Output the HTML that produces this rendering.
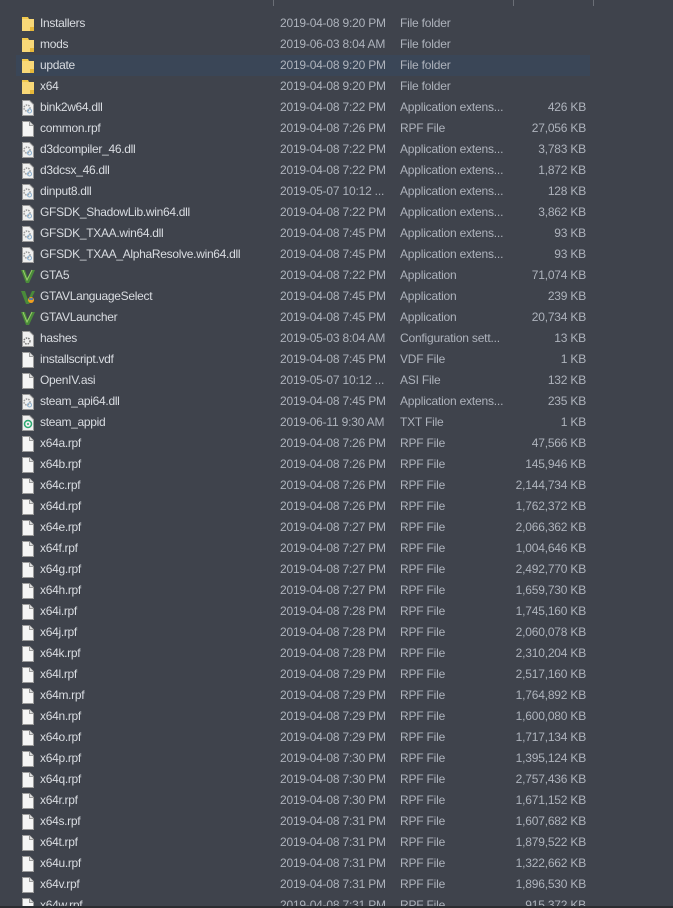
<!DOCTYPE html>
<html><head><meta charset="utf-8"><style>
body{margin:0;width:673px;height:908px;background:#3f434c;overflow:hidden;position:relative;font-family:"Liberation Sans",sans-serif;font-size:12px;}
#w{position:absolute;left:0;top:1px;width:673px;height:905px;overflow:hidden}
.r{position:absolute;left:0;width:673px;height:21px;line-height:21px;}
.r.sel{background:#3a4657;left:16px;width:574px;}
.r.sel>*{margin-left:-16px}
.ic{position:absolute;left:21px;top:3px;width:14px;height:16px}
.n{position:absolute;left:40px;color:#d9dce1;white-space:nowrap;letter-spacing:-0.3px}
.d{position:absolute;left:280px;color:#aeb3bc;white-space:nowrap;letter-spacing:-0.2px}
.t{position:absolute;left:400px;color:#aeb3bc;white-space:nowrap;letter-spacing:-0.2px}
.s{position:absolute;right:87px;color:#aeb3bc;white-space:nowrap;text-align:right;letter-spacing:-0.2px}
.sel .d{margin-left:-16px}.sel .s{right:71px}
.div{position:absolute;top:0;width:1px;height:6px;background:#6a6e76}
.bot{position:absolute;left:0;top:906px;width:673px;height:2px;background:#2b2d31}
</style></head><body>
<svg width="0" height="0" style="position:absolute">
<defs>
<symbol id="fo" viewBox="0 0 14 16"><path d="M1 1h6l1 2h5v12H1z" fill="#f2c94c"/><path d="M1 3h12v12H1z" fill="#f8d878"/><path d="M9 11h4v4H9z" fill="#e8b93a"/></symbol>
<symbol id="fi" viewBox="0 0 14 16"><path d="M1.5 .5h7l4 4v11h-11z" fill="#f5f5f5" stroke="#9a9a9a"/><path d="M8.5 .5v4h4" fill="#ddd" stroke="#9a9a9a"/></symbol>
<symbol id="dl" viewBox="0 0 14 16"><path d="M1.5 .5h7l4 4v11h-11z" fill="#f0f0f0" stroke="#9a9a9a"/><circle cx="6" cy="8" r="3" fill="none" stroke="#999" stroke-width="1.5" stroke-dasharray="1.5 1"/><circle cx="8.5" cy="11" r="2" fill="none" stroke="#8ab0d0" stroke-width="1"/></symbol>
<symbol id="cf" viewBox="0 0 14 16"><path d="M1.5 .5h7l4 4v11h-11z" fill="#f0f0f0" stroke="#9a9a9a"/><circle cx="6" cy="10" r="3" fill="none" stroke="#777" stroke-width="1.5" stroke-dasharray="1.5 1"/></symbol>
<symbol id="st" viewBox="0 0 14 16"><path d="M1.5 .5h7l4 4v11h-11z" fill="#f0f0f0" stroke="#9a9a9a"/><circle cx="7" cy="9" r="3.5" fill="none" stroke="#2aa870" stroke-width="1.5"/><circle cx="7" cy="9" r="1" fill="#2aa870"/></symbol>
<symbol id="gv" viewBox="0 0 14 16"><path d="M0 2l5 13h3l6-13h-3l-4 9-3-9z" fill="#4a8a3a"/><path d="M2 2l4 10 5-10" fill="none" stroke="#9ad06a" stroke-width="1"/></symbol>
<symbol id="gl" viewBox="0 0 14 16"><path d="M0 2l5 13h3l6-13h-3l-4 9-3-9z" fill="#4a8a3a"/><circle cx="10" cy="11" r="3" fill="#f0a020"/><path d="M8 10h4" stroke="#3070d0" stroke-width="1.5"/></symbol>
</defs></svg>
<div class="div" style="left:273px"></div><div class="div" style="left:513px"></div><div class="div" style="left:593px"></div>
<div id="w">
<div class="r" style="top:12px"><svg class="ic"><use href="#fo"/></svg><span class="n">Installers</span><span class="d">2019-04-08 9:20 PM</span><span class="t">File folder</span></div>
<div class="r" style="top:33px"><svg class="ic"><use href="#fo"/></svg><span class="n">mods</span><span class="d">2019-06-03 8:04 AM</span><span class="t">File folder</span></div>
<div class="r sel" style="top:54px"><svg class="ic"><use href="#fo"/></svg><span class="n">update</span><span class="d">2019-04-08 9:20 PM</span><span class="t">File folder</span></div>
<div class="r" style="top:75px"><svg class="ic"><use href="#fo"/></svg><span class="n">x64</span><span class="d">2019-04-08 9:20 PM</span><span class="t">File folder</span></div>
<div class="r" style="top:96px"><svg class="ic"><use href="#dl"/></svg><span class="n">bink2w64.dll</span><span class="d">2019-04-08 7:22 PM</span><span class="t">Application extens...</span><span class="s">426 KB</span></div>
<div class="r" style="top:117px"><svg class="ic"><use href="#fi"/></svg><span class="n">common.rpf</span><span class="d">2019-04-08 7:26 PM</span><span class="t">RPF File</span><span class="s">27,056 KB</span></div>
<div class="r" style="top:138px"><svg class="ic"><use href="#dl"/></svg><span class="n">d3dcompiler_46.dll</span><span class="d">2019-04-08 7:22 PM</span><span class="t">Application extens...</span><span class="s">3,783 KB</span></div>
<div class="r" style="top:159px"><svg class="ic"><use href="#dl"/></svg><span class="n">d3dcsx_46.dll</span><span class="d">2019-04-08 7:22 PM</span><span class="t">Application extens...</span><span class="s">1,872 KB</span></div>
<div class="r" style="top:180px"><svg class="ic"><use href="#dl"/></svg><span class="n">dinput8.dll</span><span class="d">2019-05-07 10:12 ...</span><span class="t">Application extens...</span><span class="s">128 KB</span></div>
<div class="r" style="top:201px"><svg class="ic"><use href="#dl"/></svg><span class="n">GFSDK_ShadowLib.win64.dll</span><span class="d">2019-04-08 7:22 PM</span><span class="t">Application extens...</span><span class="s">3,862 KB</span></div>
<div class="r" style="top:222px"><svg class="ic"><use href="#dl"/></svg><span class="n">GFSDK_TXAA.win64.dll</span><span class="d">2019-04-08 7:45 PM</span><span class="t">Application extens...</span><span class="s">93 KB</span></div>
<div class="r" style="top:243px"><svg class="ic"><use href="#dl"/></svg><span class="n">GFSDK_TXAA_AlphaResolve.win64.dll</span><span class="d">2019-04-08 7:45 PM</span><span class="t">Application extens...</span><span class="s">93 KB</span></div>
<div class="r" style="top:264px"><svg class="ic"><use href="#gv"/></svg><span class="n">GTA5</span><span class="d">2019-04-08 7:22 PM</span><span class="t">Application</span><span class="s">71,074 KB</span></div>
<div class="r" style="top:285px"><svg class="ic"><use href="#gl"/></svg><span class="n">GTAVLanguageSelect</span><span class="d">2019-04-08 7:45 PM</span><span class="t">Application</span><span class="s">239 KB</span></div>
<div class="r" style="top:306px"><svg class="ic"><use href="#gv"/></svg><span class="n">GTAVLauncher</span><span class="d">2019-04-08 7:45 PM</span><span class="t">Application</span><span class="s">20,734 KB</span></div>
<div class="r" style="top:327px"><svg class="ic"><use href="#cf"/></svg><span class="n">hashes</span><span class="d">2019-05-03 8:04 AM</span><span class="t">Configuration sett...</span><span class="s">13 KB</span></div>
<div class="r" style="top:348px"><svg class="ic"><use href="#fi"/></svg><span class="n">installscript.vdf</span><span class="d">2019-04-08 7:45 PM</span><span class="t">VDF File</span><span class="s">1 KB</span></div>
<div class="r" style="top:369px"><svg class="ic"><use href="#fi"/></svg><span class="n">OpenIV.asi</span><span class="d">2019-05-07 10:12 ...</span><span class="t">ASI File</span><span class="s">132 KB</span></div>
<div class="r" style="top:390px"><svg class="ic"><use href="#dl"/></svg><span class="n">steam_api64.dll</span><span class="d">2019-04-08 7:45 PM</span><span class="t">Application extens...</span><span class="s">235 KB</span></div>
<div class="r" style="top:411px"><svg class="ic"><use href="#st"/></svg><span class="n">steam_appid</span><span class="d">2019-06-11 9:30 AM</span><span class="t">TXT File</span><span class="s">1 KB</span></div>
<div class="r" style="top:432px"><svg class="ic"><use href="#fi"/></svg><span class="n">x64a.rpf</span><span class="d">2019-04-08 7:26 PM</span><span class="t">RPF File</span><span class="s">47,566 KB</span></div>
<div class="r" style="top:453px"><svg class="ic"><use href="#fi"/></svg><span class="n">x64b.rpf</span><span class="d">2019-04-08 7:26 PM</span><span class="t">RPF File</span><span class="s">145,946 KB</span></div>
<div class="r" style="top:474px"><svg class="ic"><use href="#fi"/></svg><span class="n">x64c.rpf</span><span class="d">2019-04-08 7:26 PM</span><span class="t">RPF File</span><span class="s">2,144,734 KB</span></div>
<div class="r" style="top:495px"><svg class="ic"><use href="#fi"/></svg><span class="n">x64d.rpf</span><span class="d">2019-04-08 7:26 PM</span><span class="t">RPF File</span><span class="s">1,762,372 KB</span></div>
<div class="r" style="top:516px"><svg class="ic"><use href="#fi"/></svg><span class="n">x64e.rpf</span><span class="d">2019-04-08 7:27 PM</span><span class="t">RPF File</span><span class="s">2,066,362 KB</span></div>
<div class="r" style="top:537px"><svg class="ic"><use href="#fi"/></svg><span class="n">x64f.rpf</span><span class="d">2019-04-08 7:27 PM</span><span class="t">RPF File</span><span class="s">1,004,646 KB</span></div>
<div class="r" style="top:558px"><svg class="ic"><use href="#fi"/></svg><span class="n">x64g.rpf</span><span class="d">2019-04-08 7:27 PM</span><span class="t">RPF File</span><span class="s">2,492,770 KB</span></div>
<div class="r" style="top:579px"><svg class="ic"><use href="#fi"/></svg><span class="n">x64h.rpf</span><span class="d">2019-04-08 7:27 PM</span><span class="t">RPF File</span><span class="s">1,659,730 KB</span></div>
<div class="r" style="top:600px"><svg class="ic"><use href="#fi"/></svg><span class="n">x64i.rpf</span><span class="d">2019-04-08 7:28 PM</span><span class="t">RPF File</span><span class="s">1,745,160 KB</span></div>
<div class="r" style="top:621px"><svg class="ic"><use href="#fi"/></svg><span class="n">x64j.rpf</span><span class="d">2019-04-08 7:28 PM</span><span class="t">RPF File</span><span class="s">2,060,078 KB</span></div>
<div class="r" style="top:642px"><svg class="ic"><use href="#fi"/></svg><span class="n">x64k.rpf</span><span class="d">2019-04-08 7:28 PM</span><span class="t">RPF File</span><span class="s">2,310,204 KB</span></div>
<div class="r" style="top:663px"><svg class="ic"><use href="#fi"/></svg><span class="n">x64l.rpf</span><span class="d">2019-04-08 7:29 PM</span><span class="t">RPF File</span><span class="s">2,517,160 KB</span></div>
<div class="r" style="top:684px"><svg class="ic"><use href="#fi"/></svg><span class="n">x64m.rpf</span><span class="d">2019-04-08 7:29 PM</span><span class="t">RPF File</span><span class="s">1,764,892 KB</span></div>
<div class="r" style="top:705px"><svg class="ic"><use href="#fi"/></svg><span class="n">x64n.rpf</span><span class="d">2019-04-08 7:29 PM</span><span class="t">RPF File</span><span class="s">1,600,080 KB</span></div>
<div class="r" style="top:726px"><svg class="ic"><use href="#fi"/></svg><span class="n">x64o.rpf</span><span class="d">2019-04-08 7:29 PM</span><span class="t">RPF File</span><span class="s">1,717,134 KB</span></div>
<div class="r" style="top:747px"><svg class="ic"><use href="#fi"/></svg><span class="n">x64p.rpf</span><span class="d">2019-04-08 7:30 PM</span><span class="t">RPF File</span><span class="s">1,395,124 KB</span></div>
<div class="r" style="top:768px"><svg class="ic"><use href="#fi"/></svg><span class="n">x64q.rpf</span><span class="d">2019-04-08 7:30 PM</span><span class="t">RPF File</span><span class="s">2,757,436 KB</span></div>
<div class="r" style="top:789px"><svg class="ic"><use href="#fi"/></svg><span class="n">x64r.rpf</span><span class="d">2019-04-08 7:30 PM</span><span class="t">RPF File</span><span class="s">1,671,152 KB</span></div>
<div class="r" style="top:810px"><svg class="ic"><use href="#fi"/></svg><span class="n">x64s.rpf</span><span class="d">2019-04-08 7:31 PM</span><span class="t">RPF File</span><span class="s">1,607,682 KB</span></div>
<div class="r" style="top:831px"><svg class="ic"><use href="#fi"/></svg><span class="n">x64t.rpf</span><span class="d">2019-04-08 7:31 PM</span><span class="t">RPF File</span><span class="s">1,879,522 KB</span></div>
<div class="r" style="top:852px"><svg class="ic"><use href="#fi"/></svg><span class="n">x64u.rpf</span><span class="d">2019-04-08 7:31 PM</span><span class="t">RPF File</span><span class="s">1,322,662 KB</span></div>
<div class="r" style="top:873px"><svg class="ic"><use href="#fi"/></svg><span class="n">x64v.rpf</span><span class="d">2019-04-08 7:31 PM</span><span class="t">RPF File</span><span class="s">1,896,530 KB</span></div>
<div class="r" style="top:894px"><svg class="ic"><use href="#fi"/></svg><span class="n">x64w.rpf</span><span class="d">2019-04-08 7:31 PM</span><span class="t">RPF File</span><span class="s">915,372 KB</span></div>
</div>
<div class="bot"></div>
</body></html>
